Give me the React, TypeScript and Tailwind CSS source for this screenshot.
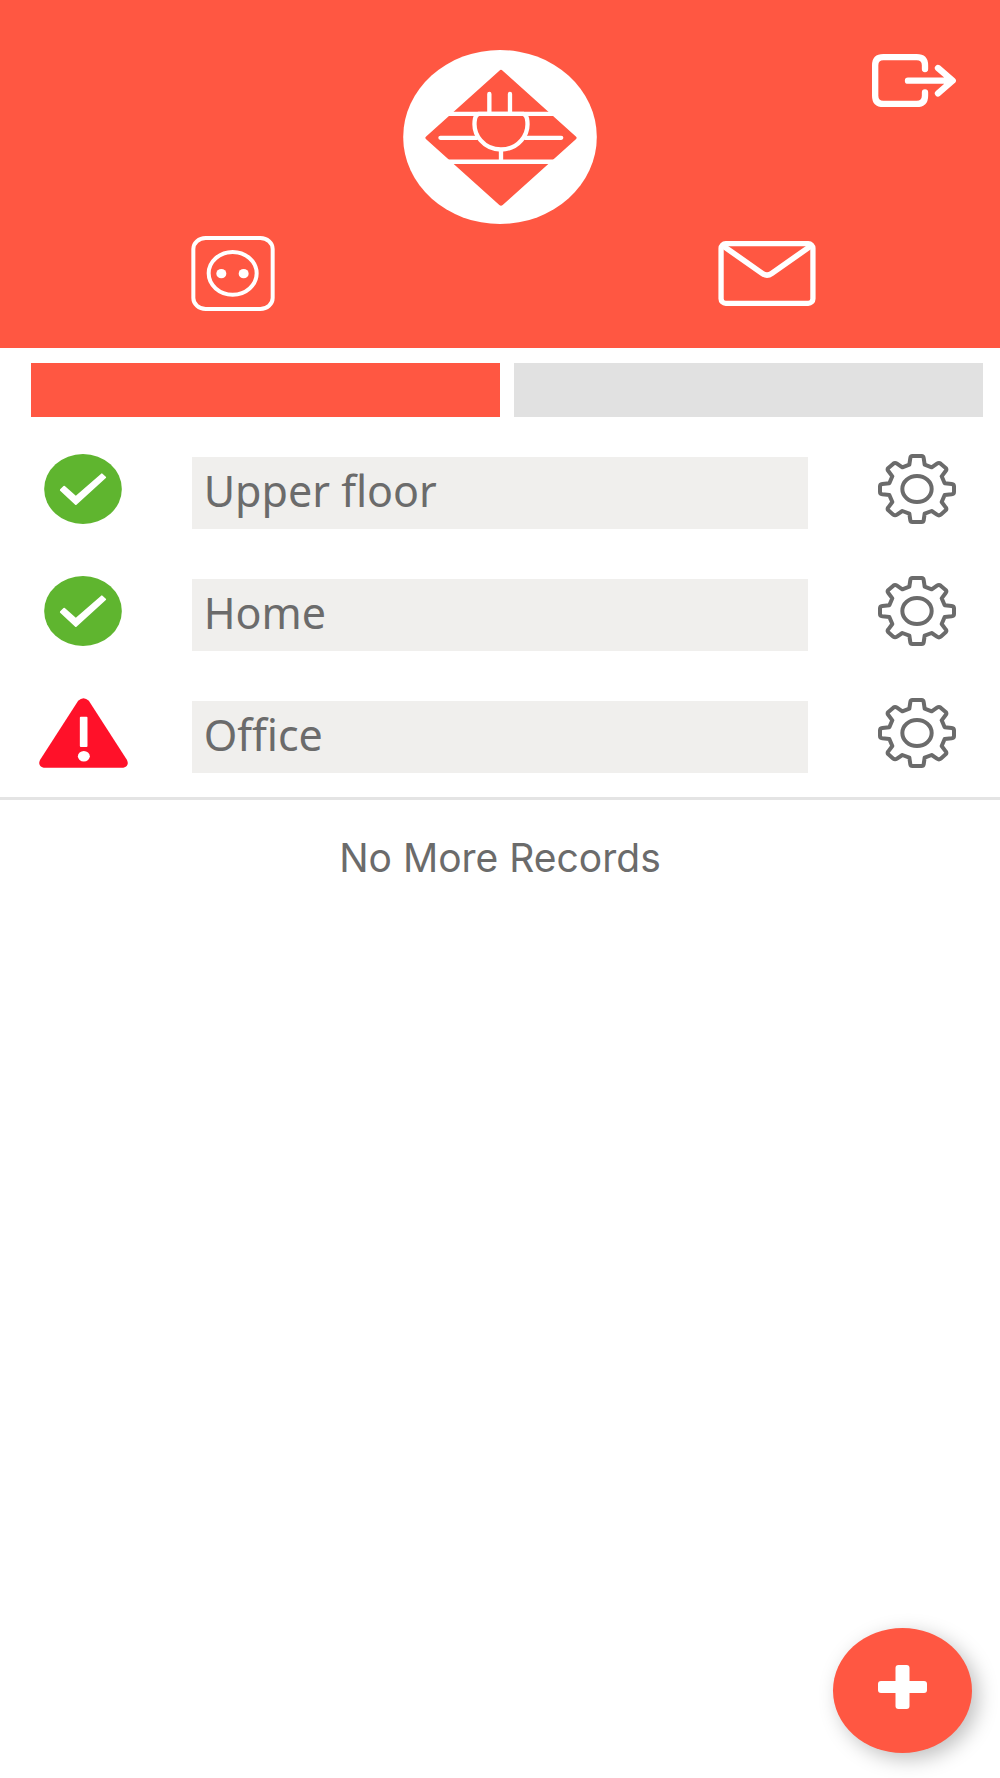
import { useState } from 'react';
import clsx from 'clsx';

type Status = 'ok' | 'error';

interface Place {
  id: number;
  name: string;
  status: Status;
}

const places: Place[] = [
  { id: 1, name: 'Upper floor', status: 'ok' },
  { id: 2, name: 'Home', status: 'ok' },
  { id: 3, name: 'Office', status: 'error' },
];

const tabs = ['Sockets', 'Messages'];

function Logo() {
  return (
    <svg viewBox="39 28 582 523" className="w-[194px] h-[174px]" role="img" aria-label="Logo">
      <ellipse cx="330" cy="289.5" rx="291" ry="261.5" fill="#fff" />
      <path
        d="M328 90Q333 85 338 90L558 288Q563 292 558 296L338 494Q333 499 328 494L108 296Q103 292 108 288Z"
        fill="#ff5742"
      />
      <g fill="none" stroke="#fff" strokeWidth="13" strokeLinecap="round">
        <path d="M160 220H506M160 364H506M298 160V216M360 160V216M333 328V362M151 292H260M406 292H514" />
        <path
          d="M266 220Q258 222 255 234C245 285 284 327 333 327C382 327 421 285 411 234Q408 222 400 220Z"
          fill="#ff5742"
        />
      </g>
    </svg>
  );
}

function LogoutIcon() {
  return (
    <svg
      viewBox="66 42 252 159"
      className="w-[84px] h-[53px]"
      fill="none"
      stroke="#fff"
      strokeWidth="19"
      strokeLinecap="round"
      aria-hidden="true"
    >
      <path d="M225 87V76Q225 51.5 200 51.5H100Q75.5 51.5 75.5 76V167Q75.5 191.5 100 191.5H200Q225 191.5 225 167V157" />
      <path d="M174 122H302M264 84L308 122L264 160" strokeLinejoin="round" />
    </svg>
  );
}

function SocketIcon() {
  return (
    <svg viewBox="66 47 250 225" className="w-[84px] h-[75px]" aria-hidden="true">
      <g fill="none" stroke="#fff" strokeWidth="12">
        <rect x="72" y="53" width="238" height="213" rx="37" ry="33" />
        <ellipse cx="190" cy="159" rx="72" ry="64" />
      </g>
      <ellipse cx="156" cy="160" rx="15" ry="14" fill="#fff" />
      <ellipse cx="223" cy="160" rx="15" ry="14" fill="#fff" />
    </svg>
  );
}

function MailIcon() {
  return (
    <svg
      viewBox="57 62 294 196"
      className="w-[98px] h-[65px]"
      fill="none"
      stroke="#fff"
      strokeWidth="16"
      aria-hidden="true"
    >
      <rect x="65.5" y="70" width="277" height="180" rx="14" />
      <path d="M72 77L190 160Q204 170 218 160L336 77" strokeWidth="17" />
    </svg>
  );
}

function StatusIcon({ status }: { status: Status }) {
  if (status === 'error') {
    return (
      <svg viewBox="56 52 268 210" className="w-[89px] h-[70px]" role="img" aria-label="Error">
        <path
          d="M174 60Q190 44 206 60L321 238Q329 256 310 262H70Q51 256 59 238Z"
          fill="#ff1129"
        />
        <rect x="179" y="108" width="23" height="91" rx="3" fill="#fff" />
        <ellipse cx="191" cy="227" rx="18" ry="16" fill="#fff" />
      </svg>
    );
  }

  return (
    <svg viewBox="74 342 233 210" className="w-[78px] h-[70px]" role="img" aria-label="Connected">
      <ellipse cx="190.500" cy="447" rx="116.500" ry="105" fill="#5fb52f" />
      <path
        d="M122 448L132 438Q134 436 136 438L169 467L245 401Q247 399 249 401L259 410Q261 412 259 414L171 494Q169 496 167 494L122 452Q120 450 122 448Z"
        fill="#fff"
      />
    </svg>
  );
}

function GearIcon() {
  return (
    <svg
      viewBox="113 72 234 210"
      className="w-[78px] h-[70px]"
      fill="none"
      stroke="#6b6b6b"
      strokeWidth="12"
      strokeLinejoin="round"
      aria-hidden="true"
    >
      <path d="M216 78H244Q249 78 250 84L253 104L274 112L290 101Q296 97 301 101L316 114Q320 118 316 123L304 139L313 160L334 162Q341 163 341 169V186Q341 192 334 193L313 195L304 216L316 232Q320 237 316 241L301 254Q296 258 290 254L274 243L253 251L250 271Q249 276 244 276H216Q211 276 210 271L207 251L186 243L170 254Q164 258 159 254L144 241Q140 237 144 232L156 216L147 195L126 193Q119 192 119 186V169Q119 163 126 162L147 160L156 139L144 123Q140 118 144 114L159 101Q164 97 170 101L186 112L207 104L210 84Q211 78 216 78Z" />
      <ellipse cx="230" cy="177" rx="44" ry="39" />
    </svg>
  );
}

function PlaceRow({ place }: { place: Place }) {
  return (
    <li className="grid grid-cols-[1fr_4fr_1fr] items-start">
      <div className="flex justify-center">
        <StatusIcon status={place.status} />
      </div>
      <div className="px-[25px] pt-[3px]">
        <input
          type="text"
          defaultValue={place.name}
          aria-label="Place name"
          className="block w-full h-[72px] pl-3 pb-[6px] bg-[#f0efed] text-[#6b6b6b] text-[43px] font-['Noto_Sans',sans-serif] outline-none"
        />
      </div>
      <div className="flex justify-center">
        <button type="button" aria-label={`Settings for ${place.name}`}>
          <GearIcon />
        </button>
      </div>
    </li>
  );
}

export default function App() {
  const [activeTab, setActiveTab] = useState(0);

  return (
    <div className="min-h-screen bg-white text-[#6b6b6b] font-['Inter',sans-serif]">
      <header className="bg-[#ff5742] pt-[50px] pb-[37px]">
        <div className="grid grid-cols-3 items-start">
          <div className="col-start-2 flex justify-center">
            <Logo />
          </div>
          <div className="flex justify-end pr-11 pt-1">
            <button type="button" aria-label="Log out">
              <LogoutIcon />
            </button>
          </div>
        </div>
        <nav className="flex items-center justify-between px-[18%] pt-3">
          <button type="button" aria-label="Sockets" className="flex justify-center w-[106px]">
            <SocketIcon />
          </button>
          <button type="button" aria-label="Messages" className="flex justify-center w-[106px]">
            <MailIcon />
          </button>
        </nav>
      </header>

      <main>
        <div className="grid grid-cols-2 gap-[14px] pl-[31px] pr-[17px] pt-[15px]">
          {tabs.map((tab, i) => (
            <button
              key={tab}
              type="button"
              aria-label={tab}
              aria-pressed={activeTab === i}
              onClick={() => setActiveTab(i)}
              className={clsx('h-[54px]', activeTab === i ? 'bg-[#ff5742]' : 'bg-[#e1e1e1]')}
            />
          ))}
        </div>

        <ul className="flex flex-col gap-[47px] pt-[37px] pb-6 border-b-[3px] border-[#e4e4e4]">
          {places.map((place) => (
            <PlaceRow key={place.id} place={place} />
          ))}
        </ul>

        <p className="pt-8 text-center text-[39px] leading-[52px]">No More Records</p>
      </main>

      {/* Add button floats above the list */}
      <button
        type="button"
        aria-label="Add place"
        className="fixed right-7 bottom-[25px] flex items-center justify-center w-[139px] h-[125px] pb-2 rounded-[50%] bg-[#ff5742] shadow-[6px_6px_20px_rgba(0,0,0,0.25)]"
      >
        <svg viewBox="0 0 49 44" className="w-[49px] h-[44px]" fill="#fff" aria-hidden="true">
          <rect x="0" y="16" width="49" height="12" rx="3" />
          <rect x="17.500" y="0" width="14" height="44" rx="3" />
        </svg>
      </button>
    </div>
  );
}
